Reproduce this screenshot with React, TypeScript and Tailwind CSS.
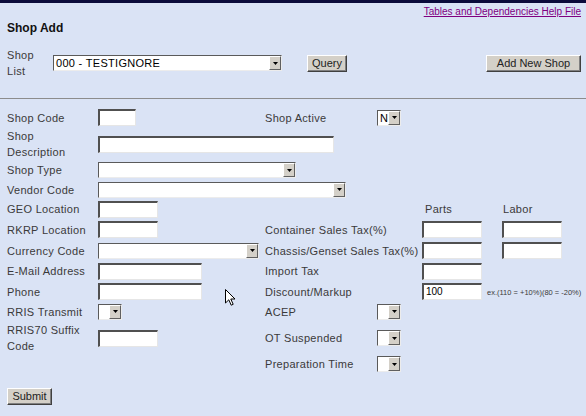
const font = { fontFamily: '"Liberation Sans", Arial, sans-serif' };

function Field({ width, value = '' }: { width: string; value?: string }) {
  return (
    <div
      className={`${width} h-[17px] shrink-0 bg-white border-t-2 border-l-2 border-r border-b border-t-[#505050] border-l-[#505050] border-r-[#e6e6e6] border-b-[#e6e6e6] text-[10px] leading-[13px] pl-[2px] text-black`}
    >
      {value}
    </div>
  );
}

function Sel({ width, value = '' }: { width: string; value?: string }) {
  return (
    <div
      className={`${width} h-[16px] shrink-0 flex bg-white border border-t-[#5a5a5a] border-l-[#5a5a5a] border-r-[#ececec] border-b-[#ececec]`}
    >
      <div className="flex-1 overflow-hidden whitespace-nowrap text-[11px] leading-[14px] pl-[2px] tracking-[0.3px] text-black">{value}</div>
      <div className="w-[12px] h-[14px] bg-[#d4d0c8] flex items-center justify-center border border-t-white border-l-white border-r-[#606060] border-b-[#606060]">
        <svg width="5" height="3" viewBox="0 0 5 3">
          <path d="M0 0h5L2.5 3z" fill="#000" />
        </svg>
      </div>
    </div>
  );
}

function Btn({ children, width }: { children: string; width: string }) {
  return (
    <div
      className={`${width} h-[17px] flex items-center justify-center bg-[#d4d0c8] border border-t-white border-l-white border-r-[#404040] border-b-[#404040] shadow-[inset_-1px_-1px_0_#808080] text-[11px] text-[#222]`}
    >
      {children}
    </div>
  );
}

function Row({ h, left, right }: { h: string; left?: React.ReactNode; right?: React.ReactNode }) {
  return (
    <div className={`${h} flex items-center`}>
      <div className="w-[258px] shrink-0 flex items-center">{left}</div>
      <div className="flex items-center">{right}</div>
    </div>
  );
}

function L({ children }: { children: React.ReactNode }) {
  return <div className="w-[91px] shrink-0 text-[11px] leading-[16px] tracking-[0.3px] text-[#3a3a3a]">{children}</div>;
}

function RL({ children, width = 'w-[112px]' }: { children: React.ReactNode; width?: string }) {
  return (
    <div className={`${width} shrink-0 whitespace-nowrap text-[11px] leading-[16px] tracking-[0.3px] text-[#3a3a3a]`}>{children}</div>
  );
}

export default function App() {
  return (
    <div className="relative w-[586px] h-[416px] overflow-hidden bg-[#dae3f5]" style={font}>
      <div className="h-[3px] bg-[#0b0b3b]" />
      <div className="h-[15px] flex justify-end pr-[5px] pt-[3px]">
        <span className="text-[10px] leading-[12px] text-[#800080] underline">Tables and Dependencies Help File</span>
      </div>
      <div className="h-[20px] pl-[7px] text-[12px] font-bold leading-[20px] text-[#111]">Shop Add</div>

      <div className="mt-[9px] h-[32px] flex items-center pl-[7px]">
        <div className="w-[46px] text-[11px] leading-[16px] tracking-[0.3px] text-[#3a3a3a]">
          Shop
          <br />
          List
        </div>
        <Sel width="w-[229px]" value="000 - TESTIGNORE" />
        <div className="ml-[25px]">
          <Btn width="w-[40px]">Query</Btn>
        </div>
        <div className="ml-auto mr-[5px]">
          <Btn width="w-[95px]">Add New Shop</Btn>
        </div>
      </div>

      <div className="mt-[19px] border-t border-[#8c8c8c]" />

      <div className="mt-[8px] pl-[7px]">
        <Row
          h="h-[21px]"
          left={
            <>
              <L>Shop Code</L>
              <Field width="w-[38px]" />
            </>
          }
          right={
            <>
              <RL>Shop Active</RL>
              <Sel width="w-[24px]" value="N" />
            </>
          }
        />
        <Row
          h="h-[32px]"
          left={
            <>
              <L>
                Shop
                <br />
                Description
              </L>
              <Field width="w-[236px]" />
            </>
          }
        />
        <Row
          h="h-[20px]"
          left={
            <>
              <L>Shop Type</L>
              <Sel width="w-[198px]" />
            </>
          }
        />
        <Row
          h="h-[19px]"
          left={
            <>
              <L>Vendor Code</L>
              <Sel width="w-[248px]" />
            </>
          }
        />
        <Row
          h="h-[20px]"
          left={
            <>
              <L>GEO Location</L>
              <Field width="w-[60px]" />
            </>
          }
          right={
            <>
              <RL width="w-[160px]"> </RL>
              <RL width="w-[78px]">Parts</RL>
              <RL width="w-[40px]">Labor</RL>
            </>
          }
        />
        <Row
          h="h-[21px]"
          left={
            <>
              <L>RKRP Location</L>
              <Field width="w-[60px]" />
            </>
          }
          right={
            <>
              <RL width="w-[157px]">Container Sales Tax(%)</RL>
              <Field width="w-[60px]" />
              <div className="w-[20px]" />
              <Field width="w-[60px]" />
            </>
          }
        />
        <Row
          h="h-[21px]"
          left={
            <>
              <L>Currency Code</L>
              <Sel width="w-[161px]" />
            </>
          }
          right={
            <>
              <RL width="w-[157px]">Chassis/Genset Sales Tax(%)</RL>
              <Field width="w-[60px]" />
              <div className="w-[20px]" />
              <Field width="w-[60px]" />
            </>
          }
        />
        <Row
          h="h-[20px]"
          left={
            <>
              <L>E-Mail Address</L>
              <Field width="w-[104px]" />
            </>
          }
          right={
            <>
              <RL width="w-[157px]">Import Tax</RL>
              <Field width="w-[60px]" />
            </>
          }
        />
        <Row
          h="h-[21px]"
          left={
            <>
              <L>Phone</L>
              <Field width="w-[104px]" />
            </>
          }
          right={
            <>
              <RL width="w-[157px]">Discount/Markup</RL>
              <Field width="w-[60px]" value="100" />
              <span className="ml-[5px] mt-[3px] whitespace-nowrap text-[7.5px] text-[#3a3a3a]">ex.(110 = +10%)(80 = -20%)</span>
            </>
          }
        />
        <Row
          h="h-[19px]"
          left={
            <>
              <L>RRIS Transmit</L>
              <Sel width="w-[24px]" />
            </>
          }
          right={
            <>
              <RL>ACEP</RL>
              <Sel width="w-[24px]" />
            </>
          }
        />
        <Row
          h="h-[34px]"
          left={
            <>
              <L>
                RRIS70 Suffix
                <br />
                Code
              </L>
              <Field width="w-[60px]" />
            </>
          }
          right={
            <>
              <RL>OT Suspended</RL>
              <Sel width="w-[24px]" />
            </>
          }
        />
        <Row
          h="h-[18px]"
          right={
            <>
              <RL>Preparation Time</RL>
              <Sel width="w-[24px]" />
            </>
          }
        />
        <div className="mt-[15px]">
          <Btn width="w-[45px]">Submit</Btn>
        </div>
      </div>

      <svg className="absolute left-[225px] top-[289px]" width="12" height="18" viewBox="0 0 12 18">
        <path d="M0.5 0.5L0.5 14L3.8 10.8L6.2 16.2L8.2 15.3L5.8 10L10 10Z" fill="#fff" stroke="#000" strokeWidth="1" />
      </svg>
    </div>
  );
}
